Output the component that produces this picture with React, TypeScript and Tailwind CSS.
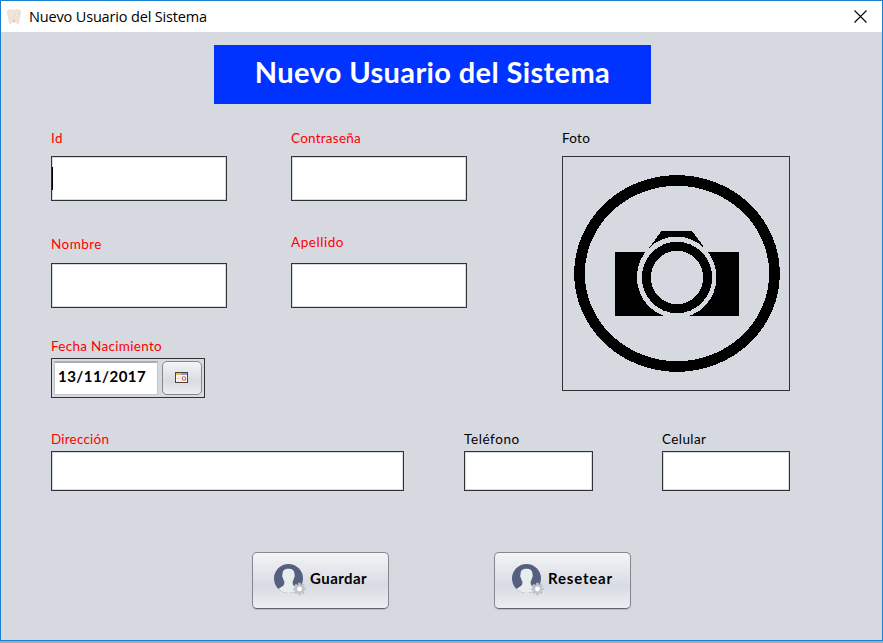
import type { ReactNode } from "react";

function ToothIcon() {
  return (
    <svg width="16" height="18" viewBox="0 0 16 18" className="shrink-0">
      <path
        d="M1 4C1 1.500 3 .8 5 1.300C7 2 9 2 11 1.300C13.500 .8 15 2 15 4.500C15 7 14 9 13.700 11.500C13.500 14 13 16.500 11.800 16.500C10.800 16.500 10.800 13.500 8 13.500C5.500 13.500 5.500 16 4.300 16C2.800 16 2.700 13 2.300 11C2 8.500 1 7 1 4Z"
        fill="#ece3d5"
      />
      <path d="M5.500 4V8M10.500 4V8" stroke="#f3ece0" strokeWidth="1" />
      <circle cx="7.800" cy="13" r="1.500" fill="#d9cfc0" />
    </svg>
  );
}

function CameraIcon() {
  return (
    <svg width="226" height="233" viewBox="563 157 226 233" shapeRendering="crispEdges">
      <ellipse cx="677" cy="273.500" rx="97.500" ry="93" fill="none" stroke="#000" strokeWidth="10.700" />
      <path d="M615 252H739V316H615Z" />
      <path d="M661.500 231H692L703.500 246.500L700 254H652L648 249.500Z" />
      <ellipse cx="676.700" cy="277.300" rx="39.800" ry="40.700" fill="#d6d9e0" />
      <ellipse cx="677" cy="277.500" rx="30.600" ry="31.200" fill="none" stroke="#000" strokeWidth="9" />
    </svg>
  );
}

function CalendarIcon() {
  return (
    <svg width="14" height="12" viewBox="0 0 14 12">
      <rect x=".5" y=".5" width="12" height="10" fill="#f7f7f4" stroke="#4c4238" />
      <path d="M1 1H6V3H1Z" fill="#f0bd55" />
      <path d="M6 1H12V3H6Z" fill="#7d9ed8" />
      <path d="M3.500 4V10M6 4V10M1 6.500H6" stroke="#dddcd8" strokeWidth=".7" />
      <circle cx="9" cy="6.500" r="1.700" fill="#fff" stroke="#e8575b" strokeWidth="1.100" />
    </svg>
  );
}

function UserGearIcon() {
  return (
    <svg width="32" height="32" viewBox="0 0 32 32" className="shrink-0">
      <defs>
        <clipPath id="avatar">
          <circle cx="14.500" cy="14.500" r="14.500" />
        </clipPath>
      </defs>
      <circle cx="14.500" cy="14.500" r="14.500" fill="#556080" />
      <path
        clipPath="url(#avatar)"
        d="M14.500 4.700C10.300 4.700 8.300 6.800 8.600 10.300C7.900 11 8.200 13.300 9 13.900C9.300 15.500 9.700 16.500 10.300 17.300V20C9.800 22 7.500 23 3.500 25.500V30H26V25.500C22.500 23.500 19.200 22 18.700 20V17.300C19.300 16.500 19.700 15.500 20 13.900C20.800 13.300 21.100 11 20.400 10.300C20.700 6.800 18.700 4.700 14.500 4.700Z"
        fill="#e7eced"
      />
      <g transform="translate(25.500 25)">
        <path d="M0 -6.200V6.200M-6.200 0H6.200M-4.400 -4.400L4.400 4.400M-4.400 4.400L4.400 -4.400" stroke="#bdc3c7" strokeWidth="2.700" />
        <circle r="3.500" fill="#fff" stroke="#bdc3c7" strokeWidth="2.200" />
      </g>
    </svg>
  );
}

function Label({ children, className = "" }: { children: ReactNode; className?: string }) {
  return (
    <div className={`h-4 text-[13.500px] leading-4 whitespace-nowrap ${className}`}>{children}</div>
  );
}

function Field({ className, caret = false }: { className: string; caret?: boolean }) {
  return (
    <div className={`flex items-center border border-[#303236] bg-white shadow-[inset_0_0_0_1px_#d6d9e0] ${className}`}>
      {caret && <span className="h-[23px] w-px bg-black" />}
    </div>
  );
}

function ActionButton({ children, className }: { children: ReactNode; className: string }) {
  return (
    <button
      className={`flex h-[57px] w-[137px] items-center gap-1 rounded-[5px] border border-[#85888e] border-b-[#606369] bg-linear-to-b from-[#f3f4f6] via-[#d8dbe2] via-60% to-[#eceef3] pb-px text-[15px] font-bold shadow-[0_1px_1px_#b9bcc4] ${className}`}
    >
      <UserGearIcon />
      <span className="pb-1">{children}</span>
    </button>
  );
}

export default function App() {
  return (
    <div className="flex h-[643px] w-[883px] flex-col bg-[#aaa9aa] font-['Lato',sans-serif] text-black">
      <div className="flex h-[641px] flex-col border border-[#1c80d0] bg-[#d6d9e0]">
        <header className="flex h-[31px] shrink-0 items-center bg-white pr-[15px] pl-[5px]">
          <ToothIcon />
          <span className="ml-[7px] font-['Open_Sans',sans-serif] text-[14.500px] tracking-[-0.160px]">
            Nuevo Usuario del Sistema
          </span>
          <svg width="13" height="13" viewBox="0 0 13 13" className="ml-auto">
            <path d="M.5 .5L12.500 12.500M12.500 .5L.5 12.500" stroke="#000" strokeWidth="1.100" />
          </svg>
        </header>

        <main className="flex flex-col pt-[13px] pl-[50px]">
          <h1 className="ml-[163px] flex h-[59px] w-[437px] items-center justify-center bg-[#0033ff] pb-[6px] text-[29px] font-bold tracking-[0.370px] whitespace-nowrap text-white">
            Nuevo Usuario del Sistema
          </h1>

          <div className="mt-[26px] flex h-[261px]">
            <div className="w-[240px] text-[#ff0000]">
              <Label className="tracking-[0.300px]">Id</Label>
              <Field className="mt-[10px] h-[45px] w-[176px]" caret />
              <Label className="mt-[35px] tracking-[0.450px]">Nombre</Label>
              <Field className="mt-[11px] h-[45px] w-[176px]" />
              <Label className="mt-[30px] tracking-[0.300px]">Fecha Nacimiento</Label>
              <div className="mt-[4px] flex h-[40px] w-[154px] border border-[#303236] p-[2px]">
                <div className="flex h-[34px] w-[104px] items-center border border-t-2 border-[#c3c5ca] border-t-[#aaadb2] bg-white pb-[5px] pl-[3px] text-[15px] font-bold tracking-[0.450px] text-black">
                  13/11/2017
                </div>
                <div className="ml-1 flex h-[34px] w-10 items-center justify-center rounded-[5px] border border-[#85888e] bg-linear-to-b from-[#f3f4f6] via-[#d8dbe2] via-60% to-[#eceef3]">
                  <CalendarIcon />
                </div>
              </div>
            </div>
            <div className="w-[271px] text-[#ff0000]">
              <Label className="tracking-[0.250px]">Contraseña</Label>
              <Field className="mt-[10px] h-[45px] w-[176px]" />
              <Label className="mt-[33px] tracking-[0.550px]">Apellido</Label>
              <Field className="mt-[13px] h-[45px] w-[176px]" />
            </div>
            <div>
              <Label className="tracking-[0.250px]">Foto</Label>
              <div className="mt-[10px] h-[235px] w-[228px] border border-[#303236]">
                <CameraIcon />
              </div>
            </div>
          </div>

          <div className="mt-[40px] flex">
            <div className="w-[413px] text-[#ff0000]">
              <Label className="tracking-[0.200px]">Dirección</Label>
              <Field className="mt-[4px] h-[40px] w-[353px]" />
            </div>
            <div className="w-[198px]">
              <Label className="tracking-[0.600px]">Teléfono</Label>
              <Field className="mt-[4px] h-[40px] w-[129px]" />
            </div>
            <div>
              <Label className="tracking-[0.400px]">Celular</Label>
              <Field className="mt-[4px] h-[40px] w-[128px]" />
            </div>
          </div>

          <div className="mt-[61px] ml-[201px] flex gap-[105px]">
            <ActionButton className="pl-[21px] tracking-[0.450px]">Guardar</ActionButton>
            <ActionButton className="pl-[17px] tracking-[0.800px]">Resetear</ActionButton>
          </div>
        </main>
      </div>
    </div>
  );
}
